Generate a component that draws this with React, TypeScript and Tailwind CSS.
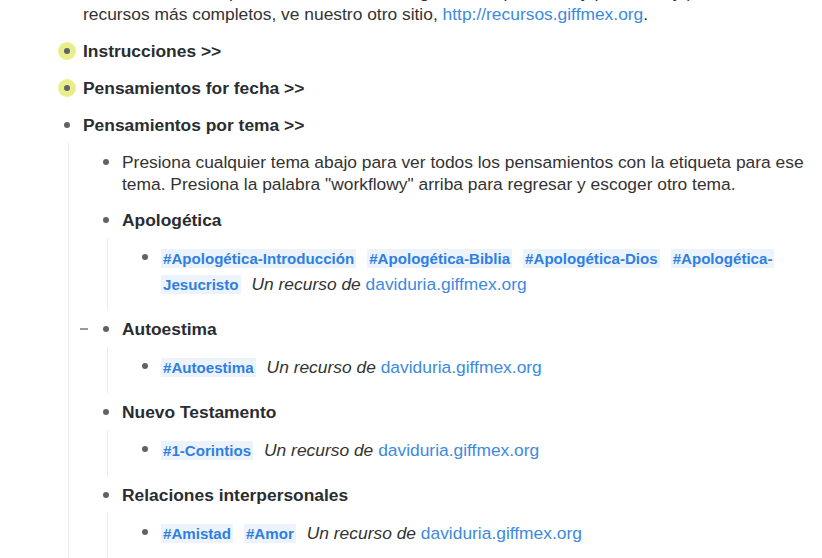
import React from "react";

type BulletKind = "normal" | "highlight";

function Bullet({ kind = "normal", collapse = false, h = 22 }: { kind?: BulletKind; collapse?: boolean; h?: number }) {
  return (
    <div className={`relative w-[32px] shrink-0 flex items-center justify-center ${h === 26 ? "h-[24px]" : "h-[22px]"}`}>
      {kind === "highlight" && <span className="absolute w-[18px] h-[18px] rounded-full bg-[#e9ee8c]" />}
      <span className="relative w-[6px] h-[6px] rounded-full bg-[#5f6266]" />
      {collapse && <span className="absolute left-[-10px] top-[10px] w-[8px] h-[2px] bg-[#9a9a9a]" />}
    </div>
  );
}

function Heading({ text, kind, collapse, pb = "pb-[7px]" }: { text: string; kind?: BulletKind; collapse?: boolean; pb?: string }) {
  return (
    <div className={`flex pt-[8px] ${pb}`}>
      <Bullet kind={kind} collapse={collapse} />
      <div className="font-bold text-[17.4px] leading-[22px] text-[#2a2d30]">{text}</div>
    </div>
  );
}

function Tag({ children }: { children: React.ReactNode }) {
  return (
    <span className="bg-[#edf3fb] text-[#2f7fe0] font-bold text-[15.1px] leading-[18px] px-[2px] py-[1px] mr-[11px] [box-decoration-break:clone]">
      {children}
    </span>
  );
}

function Credit() {
  return (
    <span>
      <span className="italic text-[#333]">Un recurso de </span>
      <span className="text-[#3d8ae0]">daviduria.giffmex.org</span>
    </span>
  );
}

function TagRow({ children }: { children: React.ReactNode }) {
  return (
    <div className="flex pt-[7px] pb-[7px]">
      <Bullet h={26} />
      <div className="text-[17.4px] leading-[26px] text-[#333]">{children}</div>
    </div>
  );
}

function Children({ children }: { children: React.ReactNode }) {
  return <div className="ml-[17px] border-l border-[#ebebeb] pl-[21px] pb-[6px]">{children}</div>;
}

export default function App() {
  return (
    <div className="h-[558px] w-[822px] overflow-hidden bg-white" style={{ fontFamily: '"Liberation Sans", Arial, sans-serif' }}>
      <div className="-mt-[27px] pl-[51px]">
        <div className="flex pt-[8px] pb-[7px]">
          <Bullet />
          <div className="text-[17.4px] leading-[22px] text-[#333] whitespace-nowrap">
            Esta lista contiene pensamientos breves, organizados por fecha y por tema, y para
            <br />
            recursos más completos, ve nuestro otro sitio, <span className="text-[#3d8ae0]">http://recursos.giffmex.org</span>.
          </div>
        </div>
        <Heading text="Instrucciones >>" kind="highlight" />
        <Heading text="Pensamientos for fecha >>" kind="highlight" />
        <Heading text="Pensamientos por tema >>" />
        <div className="ml-[17px] border-l border-[#ebebeb] pl-[21px] min-h-[500px]">
          <div className="flex pt-[8px] pb-[6px]">
            <Bullet />
            <div className="text-[17.4px] leading-[22px] text-[#333] whitespace-nowrap">
              Presiona cualquier tema abajo para ver todos los pensamientos con la etiqueta para ese
              <br />
              tema. Presiona la palabra "workflowy" arriba para regresar y escoger otro tema.
            </div>
          </div>
          <Heading text="Apologética" />
          <Children>
            <TagRow>
              <Tag>#Apologética-Introducción</Tag>
              <Tag>#Apologética-Biblia</Tag>
              <Tag>#Apologética-Dios</Tag>
              <Tag>
                #Apologética-
                <br />
                Jesucristo
              </Tag>
              <Credit />
            </TagRow>
          </Children>
          <Heading text="Autoestima" collapse />
          <Children>
            <TagRow>
              <Tag>#Autoestima</Tag>
              <Credit />
            </TagRow>
          </Children>
          <Heading text="Nuevo Testamento" />
          <Children>
            <TagRow>
              <Tag>#1-Corintios</Tag>
              <Credit />
            </TagRow>
          </Children>
          <Heading text="Relaciones interpersonales" />
          <Children>
            <TagRow>
              <Tag>#Amistad</Tag>
              <Tag>#Amor</Tag>
              <Credit />
            </TagRow>
          </Children>
        </div>
      </div>
    </div>
  );
}
